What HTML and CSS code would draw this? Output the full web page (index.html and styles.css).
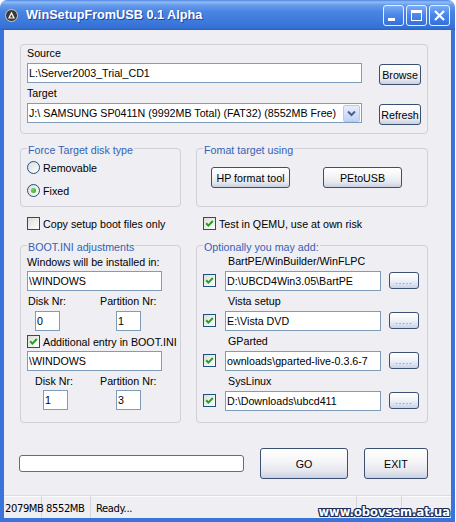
FILE: index.html
```
<!DOCTYPE html>
<html lang="en">
<head>
    <meta charset="UTF-8">
    <title>WinSetupFromUSB 0.1 Alpha</title>
    <link rel="stylesheet" href="styles.css">
</head>
<body>
<div class="window">
    <div class="titlebar">
        <svg class="app-icon" width="13" height="13" viewBox="0 0 13 13">
            <circle cx="6.5" cy="6.5" r="6" fill="#3a3a3a" stroke="#c8c8c8" stroke-width="1"/>
            <path d="M6.5 2.6 L10 9.6 H3 Z" fill="#f4f4f4"/>
            <path d="M6.5 5.6 L8 8.6 H5 Z" fill="#3a3a3a"/>
        </svg>
        <span class="title">WinSetupFromUSB 0.1 Alpha</span>
        <div class="caption-buttons">
            <span class="cap-btn">
                <svg width="19" height="19" viewBox="0 0 19 19"><rect x="4" y="12" width="7" height="3" fill="#fff"/></svg>
            </span>
            <span class="cap-btn">
                <svg width="19" height="19" viewBox="0 0 19 19"><rect x="4.5" y="4.5" width="10" height="10" fill="none" stroke="#fff" stroke-width="1"/><rect x="4" y="4" width="11" height="3" fill="#fff"/></svg>
            </span>
            <span class="cap-btn">
                <svg width="19" height="19" viewBox="0 0 19 19"><path d="M5 5 L14 14 M14 5 L5 14" stroke="#fff" stroke-width="2.2"/></svg>
            </span>
        </div>
    </div>

    <div class="frame">
        <div class="client">
            <div class="group paths">
                <div class="label">Source</div>
                <div class="field-row">
                    <input class="text path" type="text" value="L:\Server2003_Trial_CD1">
                    <button class="btn side">Browse</button>
                </div>
                <div class="label">Target</div>
                <div class="field-row">
                    <div class="combo">
                        <span class="combo-text">J:\ SAMSUNG SP0411N (9992MB Total) (FAT32) (8552MB Free)</span>
                        <span class="combo-arrow">
                            <svg width="9" height="7" viewBox="0 0 9 7"><path d="M1 1.5 L4.5 5 L8 1.5" fill="none" stroke="#4d5f86" stroke-width="2"/></svg>
                        </span>
                    </div>
                    <button class="btn side">Refresh</button>
                </div>
            </div>

            <div class="pair top-pair">
                <fieldset class="group">
                    <legend>Force Target disk type</legend>
                    <label class="option radio-row"><span class="radio"></span>Removable</label>
                    <label class="option radio-row"><span class="radio on"></span>Fixed</label>
                </fieldset>
                <fieldset class="group">
                    <legend>Fomat target using</legend>
                    <div class="format-buttons">
                        <button class="btn format">HP format tool</button>
                        <button class="btn format">PEtoUSB</button>
                    </div>
                </fieldset>
            </div>

            <div class="pair checks">
                <label class="option"><span class="check"></span>Copy setup boot files only</label>
                <label class="option"><span class="check"><svg width="11" height="11" viewBox="0 0 11 11"><path d="M2.2 5.2 L4.4 7.6 L8.8 3" fill="none" stroke="#21a121" stroke-width="2"/></svg></span>Test in QEMU, use at own risk</label>
            </div>

            <div class="pair bottom-pair">
                <fieldset class="group bootini">
                    <legend>BOOT.INI adjustments</legend>
                    <div class="label first">Windows will be installed in:</div>
                    <input class="text win-dir" type="text" value="\WINDOWS">
                    <div class="nr-grid">
                        <span class="label">Disk Nr:</span>
                        <span class="label">Partition Nr:</span>
                        <input class="text nr disk1" type="text" value="0">
                        <input class="text nr part" type="text" value="1">
                    </div>
                    <label class="option extra-entry"><span class="check"><svg width="11" height="11" viewBox="0 0 11 11"><path d="M2.2 5.2 L4.4 7.6 L8.8 3" fill="none" stroke="#21a121" stroke-width="2"/></svg></span>Additional entry in BOOT.INI</label>
                    <input class="text win-dir second" type="text" value="\WINDOWS">
                    <div class="nr-grid alt">
                        <span class="label indent">Disk Nr:</span>
                        <span class="label">Partition Nr:</span>
                        <input class="text nr disk2" type="text" value="1">
                        <input class="text nr part" type="text" value="3">
                    </div>
                </fieldset>

                <fieldset class="group extras">
                    <legend>Optionally you may add:</legend>
                    <div class="extra">
                        <div class="label">BartPE/WinBuilder/WinFLPC</div>
                        <div class="extra-row">
                            <span class="check"><svg width="11" height="11" viewBox="0 0 11 11"><path d="M2.2 5.2 L4.4 7.6 L8.8 3" fill="none" stroke="#21a121" stroke-width="2"/></svg></span>
                            <input class="text extra-path" type="text" value="D:\UBCD4Win3.05\BartPE">
                            <button class="btn dots"><span>.....</span></button>
                        </div>
                    </div>
                    <div class="extra">
                        <div class="label">Vista setup</div>
                        <div class="extra-row">
                            <span class="check"><svg width="11" height="11" viewBox="0 0 11 11"><path d="M2.2 5.2 L4.4 7.6 L8.8 3" fill="none" stroke="#21a121" stroke-width="2"/></svg></span>
                            <input class="text extra-path" type="text" value="E:\Vista DVD">
                            <button class="btn dots"><span>.....</span></button>
                        </div>
                    </div>
                    <div class="extra">
                        <div class="label">GParted</div>
                        <div class="extra-row">
                            <span class="check"><svg width="11" height="11" viewBox="0 0 11 11"><path d="M2.2 5.2 L4.4 7.6 L8.8 3" fill="none" stroke="#21a121" stroke-width="2"/></svg></span>
                            <input class="text extra-path" type="text" value="ownloads\gparted-live-0.3.6-7">
                            <button class="btn dots"><span>.....</span></button>
                        </div>
                    </div>
                    <div class="extra">
                        <div class="label">SysLinux</div>
                        <div class="extra-row">
                            <span class="check"><svg width="11" height="11" viewBox="0 0 11 11"><path d="M2.2 5.2 L4.4 7.6 L8.8 3" fill="none" stroke="#21a121" stroke-width="2"/></svg></span>
                            <input class="text extra-path" type="text" value="D:\Downloads\ubcd411">
                            <button class="btn dots"><span>.....</span></button>
                        </div>
                    </div>
                </fieldset>
            </div>

            <div class="actions">
                <div class="progress"></div>
                <button class="btn big go">GO</button>
                <button class="btn big exit">EXIT</button>
            </div>
        </div>

        <div class="statusbar">
            <span class="panel p-free">2079MB</span>
            <span class="panel p-total">8552MB</span>
            <span class="panel p-msg">Ready...</span>
            <span class="panel p-a"></span>
            <span class="panel p-b"></span>
        </div>
    </div>

    <div class="watermark">www.obovsem.at.ua</div>
</div>
</body>
</html>
```

FILE: styles.css
```
* {
    box-sizing: border-box;
}

body {
    margin: 0;
    background: #fff;
    font-family: "Liberation Sans", Arial, sans-serif;
    font-size: 10.7px;
    color: #000;
}

.window {
    position: relative;
    width: 455px;
    height: 522px;
    display: flex;
    flex-direction: column;
}

/* title bar */
.titlebar {
    flex: none;
    height: 30px;
    display: flex;
    align-items: center;
    padding: 0 5px 0 5px;
    border-radius: 7px 7px 0 0;
    background: linear-gradient(to bottom, #4a86e6 0px, #94bcf4 2px, #659cec 5px, #4983e2 12px, #3d79dc 22px, #3570d4 28px, #2a60c4 30px);
}

.app-icon {
    flex: none;
    margin-top: 1px;
}

.title {
    margin-left: 8px;
    color: #fff;
    font-weight: bold;
    font-size: 12.7px;
    text-shadow: 1px 1px 0 #1e45a0;
}

.caption-buttons {
    margin-left: auto;
    display: flex;
    gap: 2px;
}

.cap-btn {
    width: 21px;
    height: 21px;
    border: 1px solid #e8f0ff;
    border-radius: 3px;
    background: linear-gradient(to bottom, #7aacf3, #4d88e8 45%, #3570da);
    display: flex;
}

/* frame + client */
.frame {
    flex: 1;
    display: flex;
    flex-direction: column;
    border: 4px solid #3a74da;
    border-top: none;
}

.client {
    flex: 1;
    background: #efeef2;
    padding: 14px 0 0 16px;
}

.client > * {
    width: 408px;
}

.group {
    border: 1px solid #d2d0d6;
    border-radius: 4px;
    margin: 0;
    padding: 0 6px;
    min-width: 0;
}

legend {
    padding: 4px 1px 0;
    line-height: 13px;
    color: #3562b6;
}

.label {
    display: block;
    line-height: 13px;
    height: 13px;
    white-space: nowrap;
}

.text {
    height: 20px;
    border: 1px solid #7f9db9;
    background: #fff;
    font-family: "Liberation Sans", Arial, sans-serif;
    font-size: 10.7px;
    padding: 0 1px;
    margin: 0;
    outline: none;
    color: #000;
}

.btn {
    margin: 0;
    padding: 0;
    border: 1px solid #3b4f72;
    border-radius: 3px;
    background: linear-gradient(to bottom, #ffffff 0%, #f6f6f8 40%, #e6e8ef 75%, #c9d0e0 100%);
    font-family: "Liberation Sans", Arial, sans-serif;
    font-size: 10.7px;
    color: #000;
}

/* source / target */
.paths {
    height: 90px;
    padding-top: 2px;
}

.field-row {
    display: flex;
    align-items: flex-start;
    gap: 17px;
    margin-top: 3px;
    height: 22px;
}

.paths .label + .field-row + .label {
    margin-top: 2px;
}

.path, .combo {
    width: 336px;
}

.btn.side {
    width: 42px;
    height: 21px;
    margin-top: 1px;
}

.combo {
    height: 20px;
    border: 1px solid #7f9db9;
    background: #fff;
    display: flex;
    align-items: center;
    padding: 1px;
}

.combo-text {
    flex: 1;
    white-space: nowrap;
    overflow: hidden;
}

.combo-arrow {
    width: 17px;
    height: 17px;
    border: 1px solid #b8c9ea;
    border-radius: 2px;
    background: linear-gradient(to bottom, #e6eefd, #c0d3f6);
    display: flex;
    align-items: center;
    justify-content: center;
}

/* paired group boxes */
.pair {
    display: grid;
    grid-template-columns: 161px 232px;
    column-gap: 15px;
}

.top-pair {
    margin-top: 6px;
}

.option {
    display: flex;
    align-items: center;
    gap: 3px;
    white-space: nowrap;
}

.radio-row {
    height: 23px;
}

.radio-row:first-of-type {
    margin-top: -1px;
}

.top-pair .group {
    padding-bottom: 4px;
}

.radio {
    width: 13px;
    height: 13px;
    border: 1px solid #1c5180;
    border-radius: 50%;
    background: linear-gradient(135deg, #dcdcd7, #ffffff);
    display: flex;
    align-items: center;
    justify-content: center;
}

.radio.on::after {
    content: "";
    width: 5px;
    height: 5px;
    border-radius: 50%;
    background: radial-gradient(circle at 35% 35%, #6fd86f, #21a121);
}

.check {
    flex: none;
    width: 13px;
    height: 13px;
    border: 1px solid #1c5180;
    background: linear-gradient(135deg, #dcdcd7, #ffffff);
    display: flex;
}

.format-buttons {
    display: flex;
    gap: 33px;
    margin-top: 10px;
    padding-left: 8px;
}

.btn.format {
    width: 79px;
    height: 21px;
}

.checks {
    margin-top: 9px;
}

.checks .option {
    height: 15px;
    padding-left: 7px;
}

/* boot.ini + extras */
.bottom-pair {
    margin-top: 6px;
}

.bootini {
    padding-bottom: 12px;
}

.bootini .first {
    margin-top: 2px;
}

.win-dir {
    display: block;
    width: 135px;
    margin-top: 2px;
}

.nr-grid {
    display: grid;
    grid-template-columns: 72px 1fr;
    row-gap: 3px;
    margin-top: 4px;
    padding-left: 1px;
}

.nr-grid.alt {
    row-gap: 2px;
}

.nr {
    width: 25px;
}

.disk1 {
    margin-left: 7px;
}

.disk2 {
    margin-left: 15px;
}

.part {
    margin-left: 16px;
}

.indent {
    padding-left: 7px;
}

.extra-entry {
    height: 15px;
    margin-top: 3px;
}

.win-dir.second {
    margin-top: 2px;
}

.extra {
    margin-top: 4px;
}

.extra:first-of-type {
    margin-top: 1px;
}

.extra .label {
    padding-left: 25px;
}

.extra-row {
    display: flex;
    align-items: center;
    height: 21px;
    margin-top: 2px;
}

.extra-path {
    width: 156px;
    margin-left: 9px;
}

.btn.dots {
    width: 30px;
    height: 17px;
    margin-left: 8px;
    display: flex;
    align-items: flex-end;
    justify-content: center;
    background: linear-gradient(to bottom, #ffffff 0%, #f3f4f8 45%, #c7d2ea 100%);
}

.btn.dots span {
    font-size: 9px;
    line-height: 9px;
    letter-spacing: 1px;
    color: #6f86b6;
    padding-bottom: 2px;
}

/* bottom actions */
.actions {
    display: flex;
    align-items: center;
    gap: 16px;
    margin-top: 25px;
}

.progress {
    width: 225px;
    height: 17px;
    margin-left: -1px;
    border: 1px solid #6c6c6c;
    border-radius: 3px;
    background: #fff;
}

.btn.big {
    height: 31px;
}

.btn.go {
    width: 88px;
}

.btn.exit {
    width: 64px;
}

/* status bar */
.statusbar {
    flex: none;
    height: 23px;
    display: flex;
    background: #efeef2;
    border-top: 1px solid #dcdbe0;
    box-shadow: inset 0 1px 0 #fbfbfd;
    font-family: "DejaVu Sans", Verdana, sans-serif;
    font-size: 10px;
    letter-spacing: -0.4px;
}

.panel {
    display: flex;
    align-items: center;
    padding: 2px 0 0 1px;
    border-right: 1px solid #d6d5da;
    white-space: nowrap;
}

.p-free {
    width: 38px;
}

.p-total {
    width: 49px;
    padding-left: 4px;
}

.p-msg {
    width: 266px;
    padding-left: 5px;
}

.p-a {
    width: 45px;
}

.p-b {
    flex: 1;
    border-right: none;
}

.watermark {
    position: absolute;
    right: 5px;
    bottom: 3px;
    font-family: "DejaVu Sans", Verdana, sans-serif;
    font-weight: bold;
    font-size: 11.5px;
    color: #fff;
    text-shadow: 1px 0 0 #1d2b55, -1px 0 0 #1d2b55, 0 1px 0 #1d2b55, 0 -1px 0 #1d2b55,
        1px 1px 0 #1d2b55, -1px -1px 0 #1d2b55, 1px -1px 0 #1d2b55, -1px 1px 0 #1d2b55;
}
```
